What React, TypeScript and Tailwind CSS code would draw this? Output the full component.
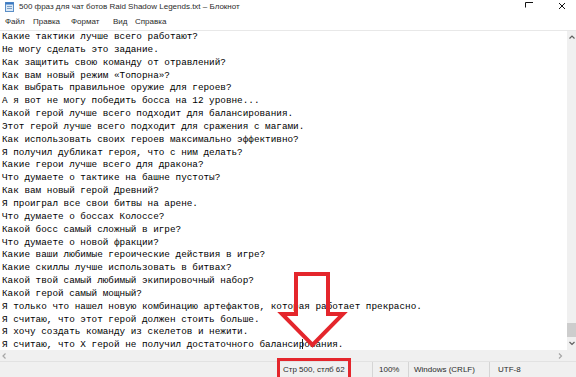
import React from "react";

const lines = [
  "Какие тактики лучше всего работают?",
  "Не могу сделать это задание.",
  "Как защитить свою команду от отравлений?",
  "Как вам новый режим «Топорна»?",
  "Как выбрать правильное оружие для героев?",
  "А я вот не могу победить босса на 12 уровне...",
  "Какой герой лучше всего подходит для балансирования.",
  "Этот герой лучше всего подходит для сражения с магами.",
  "Как использовать своих героев максимально эффективно?",
  "Я получил дубликат героя, что с ним делать?",
  "Какие герои лучше всего для дракона?",
  "Что думаете о тактике на башне пустоты?",
  "Как вам новый герой Древний?",
  "Я проиграл все свои битвы на арене.",
  "Что думаете о боссах Колоссе?",
  "Какой босс самый сложный в игре?",
  "Что думаете о новой фракции?",
  "Какие ваши любимые героические действия в игре?",
  "Какие скиллы лучше использовать в битвах?",
  "Какой твой самый любимый экипировочный набор?",
  "Какой герой самый мощный?",
  "Я только что нашел новую комбинацию артефактов, которая работает прекрасно.",
  "Я считаю, что этот герой должен стоить больше.",
  "Я хочу создать команду из скелетов и нежити.",
  "Я считаю, что X герой не получил достаточного балансирования.",
];

function NotepadIcon() {
  return (
    <svg width="9" height="10" viewBox="0 0 9 10" className="shrink-0">
      <rect x="0.5" y="0.5" width="8" height="9" fill="#dbe9f7" stroke="#5b8fc7" />
      <rect x="0.5" y="0.5" width="8" height="2" fill="#3b78c2" />
      <line x1="2" y1="4.5" x2="7" y2="4.5" stroke="#7d9fc4" />
      <line x1="2" y1="6.5" x2="7" y2="6.5" stroke="#7d9fc4" />
    </svg>
  );
}

function Chevron({ dir, color }: { dir: "up" | "down" | "left" | "right"; color: string }) {
  const pts: Record<string, string> = {
    up: "0.5,3.5 3,1 5.5,3.5",
    down: "0.5,1 3,3.5 5.5,1",
    left: "3.5,0.5 1,3 3.5,5.5",
    right: "1,0.5 3.5,3 1,5.5",
  };
  const vertical = dir === "up" || dir === "down";
  return (
    <svg
      width={vertical ? 6 : 5}
      height={vertical ? 5 : 6}
      viewBox={vertical ? "0 0 6 5" : "0 0 5 6"}
      className="shrink-0"
    >
      <polyline points={pts[dir]} fill="none" stroke={color} strokeWidth="1.2" />
    </svg>
  );
}

export default function App() {
  return (
    <div className="relative w-[576px] h-[377px] overflow-hidden bg-white flex flex-col font-['Liberation_Sans',Arial,sans-serif]">
      {/* Title bar */}
      <div className="h-[14px] shrink-0 flex items-center pl-[5px] text-[8px] text-[#2b2b2b]">
        <NotepadIcon />
        <span className="ml-[5px] whitespace-nowrap">
          500 фраз для чат ботов Raid Shadow Legends.txt – Блокнот
        </span>
        <div className="flex-1" />
        <svg width="8" height="14" viewBox="0 0 8 14" className="shrink-0">
          <polyline points="0.5,7.5 0.5,2.5 8,2.5" fill="none" stroke="#111" strokeWidth="1" />
        </svg>
        <svg width="8" height="14" viewBox="0 0 8 14" className="shrink-0 ml-[25px] mr-[10px]">
          <line x1="1" y1="3" x2="7" y2="9" stroke="#111" strokeWidth="1" />
          <line x1="7" y1="3" x2="1" y2="9" stroke="#111" strokeWidth="1" />
        </svg>
      </div>

      {/* Menu bar */}
      <div className="h-[17px] shrink-0 flex items-center pl-[5px] text-[8px] text-[#2b2b2b] border-b border-[#e8e8e8]">
        <span className="w-[28px]">Файл</span>
        <span className="w-[38px]">Правка</span>
        <span className="w-[42px]">Формат</span>
        <span className="w-[22px]">Вид</span>
        <span>Справка</span>
      </div>

      {/* Editor + vertical scrollbar */}
      <div className="flex-1 min-h-0 flex">
        <div className="flex-1 min-w-0 overflow-hidden pl-[2px] font-['Liberation_Mono','DejaVu_Sans_Mono',monospace] text-[9.33px] leading-[12.85px] text-black whitespace-pre">
          {lines.map((l, i) => (
            <div key={i}>{l}</div>
          ))}
        </div>
        <div className="w-[9px] shrink-0 bg-[#f0f0f0] flex flex-col items-center pt-[4px] pb-[4px]">
          <Chevron dir="up" color="#606060" />
          <div className="flex-1" />
          <div className="w-full h-[14px] bg-[#cdcdcd]" />
          <div className="h-[4px]" />
          <Chevron dir="down" color="#606060" />
        </div>
      </div>

      {/* Horizontal scrollbar */}
      <div className="h-[11px] shrink-0 bg-[#f0f0f0] flex items-center pl-[2px] pr-[13px]">
        <Chevron dir="left" color="#a6a6a6" />
        <div className="flex-1" />
        <Chevron dir="right" color="#a6a6a6" />
      </div>

      {/* Status bar */}
      <div className="h-[16px] shrink-0 bg-[#f0f0f0] border-t border-[#e2e2e2] flex text-[8px] text-[#2b2b2b]">
        <div className="flex-1" />
        <div className="w-[95px] border-l border-[#d5d5d5] flex items-center pl-[5px] whitespace-nowrap">
          Стр 500, стлб 62
        </div>
        <div className="w-[36px] border-l border-[#d5d5d5] flex items-center pl-[6px]">100%</div>
        <div className="w-[81px] border-l border-[#d5d5d5] flex items-center pl-[5px] whitespace-nowrap">
          Windows (CRLF)
        </div>
        <div className="w-[87px] border-l border-[#d5d5d5] flex items-center pl-[8px]">UTF-8</div>
      </div>

      {/* Red annotations */}
      <svg
        className="absolute left-0 top-0 pointer-events-none"
        width="576"
        height="377"
        viewBox="0 0 576 377"
      >
        <line x1="302.5" y1="339" x2="302.5" y2="349" stroke="#222" strokeWidth="1" />
        <path
          d="M296,274 H328 V314 H343 L312.5,345 L282,314 H296 Z"
          fill="none"
          stroke="#e4262c"
          strokeWidth="4"
          strokeLinejoin="miter"
        />
        <rect x="278.5" y="359.5" width="71" height="30" fill="none" stroke="#e4262c" strokeWidth="3" />
      </svg>
    </div>
  );
}
